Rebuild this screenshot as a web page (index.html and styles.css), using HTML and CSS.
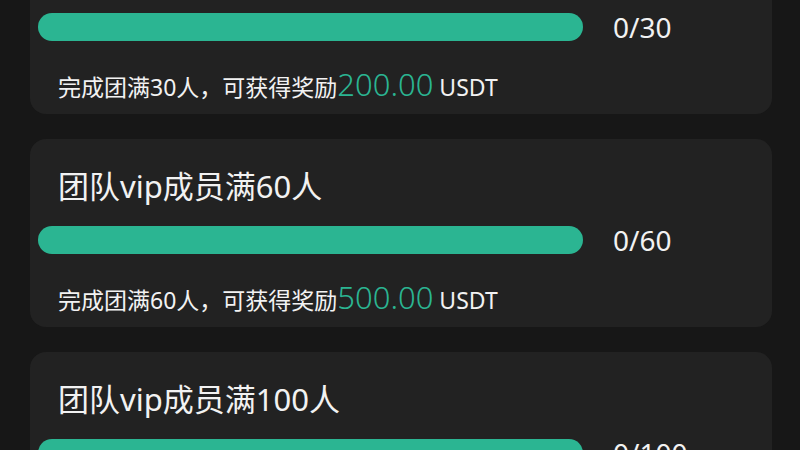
FILE: index.html
```html
<!DOCTYPE html>
<html lang="zh">
<head>
<meta charset="utf-8">
<link rel="stylesheet" href="styles.css">
</head>
<body>
<div class="list">
  <div class="card">
    <div class="title">团队vip成员满30人</div>
    <div class="progress">
      <div class="bar"></div>
      <div class="count">0/30</div>
    </div>
    <div class="reward">完成团满30人，可获得奖励<span class="amount">200.00</span> USDT</div>
  </div>
  <div class="card">
    <div class="title">团队vip成员满60人</div>
    <div class="progress">
      <div class="bar"></div>
      <div class="count">0/60</div>
    </div>
    <div class="reward">完成团满60人，可获得奖励<span class="amount">500.00</span> USDT</div>
  </div>
  <div class="card">
    <div class="title">团队vip成员满100人</div>
    <div class="progress">
      <div class="bar"></div>
      <div class="count">0/100</div>
    </div>
    <div class="reward">完成团满100人，可获得奖励<span class="amount">1000.00</span> USDT</div>
  </div>
</div>
</body>
</html>
```
FILE: styles.css
```css
html, body {
  margin: 0;
  padding: 0;
  background: #171717;
  height: 100%;
  overflow: hidden;
}
body {
  font-family: "Noto Sans", "Noto Sans CJK SC", sans-serif;
  color: #f2f2f2;
}
.list {
  display: flex;
  flex-direction: column;
  gap: 25px;
  margin-top: -74px;
  padding: 0 28px 0 30px;
}
.card {
  background: #222222;
  border-radius: 16px;
  height: 188px;
  box-sizing: border-box;
  padding-top: 30px;
}
.title {
  font-size: 31px;
  line-height: 34px;
  padding-left: 28px;
  white-space: nowrap;
}
.progress {
  display: flex;
  align-items: center;
  margin-top: 23px;
  padding-left: 8px;
  height: 28px;
}
.bar {
  width: 545px;
  height: 28px;
  border-radius: 14px;
  background: #2bb592;
  flex: none;
}
.count {
  margin-left: 30px;
  font-size: 28px;
  line-height: 28px;
}
.reward {
  margin-top: 25px;
  padding-left: 28px;
  font-size: 23px;
  line-height: 36px;
  white-space: nowrap;
}
.amount {
  color: #2bb592;
  font-size: 31px;
  font-weight: 300;
}
```
